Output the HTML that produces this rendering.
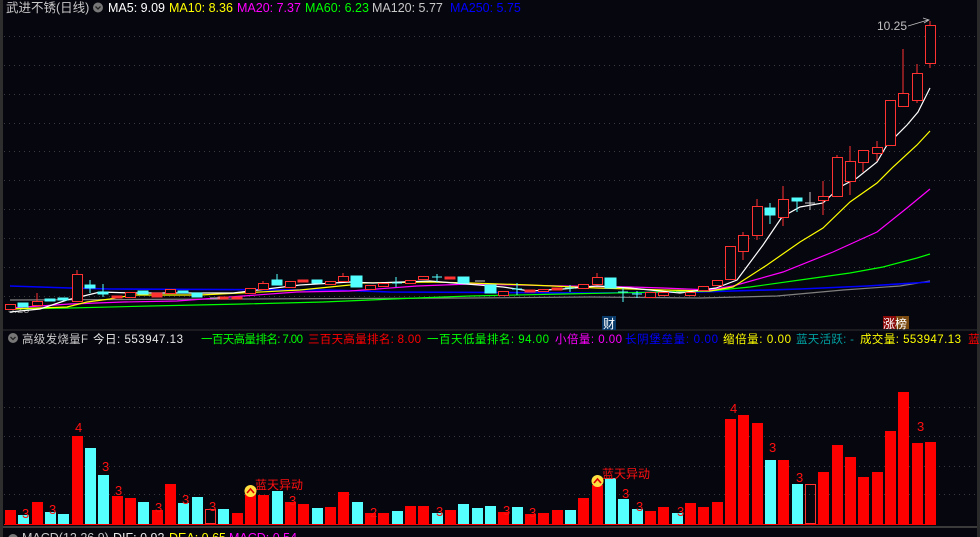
<!DOCTYPE html>
<html><head><meta charset="utf-8"><style>
html,body{margin:0;padding:0;background:#06060e;width:980px;height:537px;overflow:hidden}
svg{display:block}
text{font-family:"Liberation Sans","Noto Sans CJK SC",sans-serif}
</style></head><body>
<svg width="980" height="537" viewBox="0 0 980 537" xmlns="http://www.w3.org/2000/svg">
<rect width="980" height="537" fill="#06060e"/>
<rect x="0" y="0" width="3" height="537" fill="#2e2e2e"/>
<rect x="977" y="0" width="3" height="537" fill="#2a2a2a"/>
<line x1="3" y1="330" x2="977" y2="330" stroke="#333" stroke-width="1"/>
<line x1="3" y1="527" x2="977" y2="527" stroke="#3a3a3a" stroke-width="2"/>
<g stroke="#3a3a3a" stroke-dasharray="1,4" stroke-width="1">
<line x1="4" y1="36.5" x2="976" y2="36.5"/><line x1="4" y1="65.5" x2="976" y2="65.5"/><line x1="4" y1="94.5" x2="976" y2="94.5"/><line x1="4" y1="123.5" x2="976" y2="123.5"/><line x1="4" y1="151.5" x2="976" y2="151.5"/><line x1="4" y1="180.5" x2="976" y2="180.5"/><line x1="4" y1="209.5" x2="976" y2="209.5"/><line x1="4" y1="238.5" x2="976" y2="238.5"/><line x1="4" y1="267.5" x2="976" y2="267.5"/><line x1="4" y1="296.5" x2="976" y2="296.5"/>
<line x1="4" y1="407.5" x2="976" y2="407.5"/><line x1="4" y1="436.5" x2="976" y2="436.5"/><line x1="4" y1="466.5" x2="976" y2="466.5"/><line x1="4" y1="494.5" x2="976" y2="494.5"/>
</g>
<!-- header -->
<g font-size="12.5">
<text x="6" y="12" fill="#c8c8c8">武进不锈(日线)</text>
<circle cx="98" cy="7.5" r="5" fill="#777"/><path d="M95.5 6.5 L98 9 L100.5 6.5" stroke="#222" stroke-width="1.3" fill="none"/>
<text x="108" y="12" fill="#fff">MA5: 9.09</text>
<text x="169" y="12" fill="#ffff00">MA10: 8.36</text>
<text x="237" y="12" fill="#ff00ff">MA20: 7.37</text>
<text x="305" y="12" fill="#00ff00">MA60: 6.23</text>
<text x="372" y="12" fill="#c8c8c8">MA120: 5.77</text>
<text x="450" y="12" fill="#0000ff">MA250: 5.75</text>
</g>
<text x="877" y="30" font-size="12" fill="#c0c0c0">10.25</text>
<path d="M908 26 L928 20 M923 18 L929 20 L924 23" stroke="#c0c0c0" fill="none" stroke-width="0.8"/>
<text x="8" y="313" font-size="11" fill="#888">3.23</text>
<!-- MAs -->
<g fill="none" stroke-width="1.2">
<polyline stroke="#808080" points="10,300 470,298 590,297 700,298 777,296 843,290 900,286 930,281"/>
<polyline stroke="#0000ff" stroke-width="1.6" points="10,286 70,288 110,289 330,290 390,292 590,293 700,292 800,289 867,286 930,282"/>
<polyline stroke="#00ff00" points="10,309 70,308 150,306 243,304 323,302 417,298 470,296 563,294 663,292 710,291 750,287 800,280 850,273 883,267 917,258 930,254"/>
<polyline stroke="#ff00ff" points="10,308 70,304 123,302 177,301 243,296 297,292 350,291 417,286 470,284 563,286 630,287 663,288 710,290 733,286 783,272 833,252 877,232 907,208 930,189"/>
<polyline stroke="#ffff00" points="10,309 67,307 87,302 110,299 133,295 200,295 300,290 350,285 363,283 430,282 470,283 530,285 597,288 663,290 710,291 733,287 767,265 800,242 823,228 850,202 877,183 893,167 917,145 930,131"/>
<polyline stroke="#ffffff" points="10,312 40,309 67,300 100,292 133,293 167,293 233,293 300,285 350,282 373,283 430,281 503,287 530,291 563,289 597,286 630,288 680,293 716,288 737,280 763,245 782,217 800,207 823,203 840,187 857,178 877,162 887,145 907,125 918,112 930,88"/>
</g>
<!-- candles -->
<g stroke="#ff3232" fill="#06060e" stroke-width="1">
<rect x="5.5" y="304.5" width="10" height="5"/><line x1="37" y1="293" x2="37" y2="301"/><rect x="32.5" y="301.5" width="10" height="4"/>
<line x1="77" y1="270" x2="77" y2="274"/><rect x="72.5" y="274.5" width="10" height="27"/>
<rect x="112" y="296" width="10" height="2" fill="#ff3232"/><rect x="125.5" y="292.5" width="10" height="5"/>
<rect x="152" y="293" width="10" height="4" fill="#ff3232"/><rect x="165.5" y="289.5" width="10" height="4"/>
<rect x="218" y="297" width="10" height="2" fill="#ff3232"/><rect x="232" y="297" width="10" height="2" fill="#ff3232"/>
<rect x="245.5" y="288.5" width="10" height="5"/><line x1="263" y1="281" x2="263" y2="283"/><rect x="258.5" y="283.5" width="10" height="6"/>
<rect x="285.5" y="281.5" width="10" height="6"/><rect x="298" y="280" width="10" height="2" fill="#ff3232"/>
<rect x="325.5" y="281.5" width="10" height="3"/><line x1="343" y1="273" x2="343" y2="276"/><rect x="338.5" y="276.5" width="10" height="5"/>
<rect x="365.5" y="285.5" width="10" height="4"/><rect x="378.5" y="283.5" width="10" height="3"/>
<rect x="405.5" y="280.5" width="10" height="3"/><rect x="418.5" y="276.5" width="10" height="3"/>
<rect x="445" y="277" width="10" height="2" fill="#ff3232"/><rect x="498.5" y="291.5" width="10" height="4"/>
<rect x="525" y="290" width="10" height="2" fill="#ff3232"/><rect x="538.5" y="289.5" width="10" height="2"/><rect x="552" y="288" width="10" height="2" fill="#ff3232"/>
<rect x="578.5" y="284.5" width="10" height="4"/><line x1="597" y1="273" x2="597" y2="277"/><rect x="592.5" y="277.5" width="10" height="7"/>
<rect x="645.5" y="292.5" width="10" height="5"/><rect x="658.5" y="292.5" width="10" height="3"/><rect x="685.5" y="292.5" width="10" height="3"/><rect x="698.5" y="286.5" width="10" height="4"/>
<rect x="712.5" y="280.5" width="10" height="5"/>
<rect x="725.5" y="246.5" width="10" height="33"/>
<line x1="743" y1="232" x2="743" y2="260"/><rect x="738.5" y="235.5" width="10" height="16"/>
<line x1="757" y1="199" x2="757" y2="240"/><rect x="752.5" y="206.5" width="10" height="29"/>
<line x1="783" y1="186" x2="783" y2="226"/><rect x="778.5" y="199.5" width="10" height="18"/>
<line x1="823" y1="181" x2="823" y2="215"/><rect x="818.5" y="196.5" width="10" height="4"/>
<line x1="837" y1="155" x2="837" y2="157"/><rect x="832.5" y="157.5" width="10" height="39"/>
<line x1="850" y1="146" x2="850" y2="195"/><rect x="845.5" y="161.5" width="10" height="20"/>
<line x1="863" y1="162" x2="863" y2="172"/><rect x="858.5" y="150.5" width="10" height="12"/>
<line x1="877" y1="141" x2="877" y2="161"/><rect x="872.5" y="147.5" width="10" height="6"/>
<rect x="885.5" y="100.5" width="10" height="45"/>
<line x1="903" y1="49" x2="903" y2="93"/><rect x="898.5" y="93.5" width="10" height="13"/>
<line x1="917" y1="64" x2="917" y2="103"/><rect x="912.5" y="73.5" width="10" height="27"/>
<line x1="930" y1="21" x2="930" y2="68"/><rect x="925.5" y="25.5" width="10" height="38"/>
</g>
<g stroke="#54ffff" fill="#54ffff" stroke-width="1">
<rect x="18" y="303" width="10" height="4"/><rect x="45" y="299" width="10" height="2"/><rect x="58" y="298" width="10" height="2"/>
<line x1="90" y1="280" x2="90" y2="293"/><rect x="85" y="285" width="10" height="3"/>
<line x1="103" y1="284" x2="103" y2="297"/><rect x="98" y="292" width="10" height="2"/>
<rect x="138" y="291" width="10" height="3"/><rect x="178" y="291" width="10" height="2"/><rect x="192" y="293" width="10" height="4"/>
<line x1="277" y1="274" x2="277" y2="280"/><rect x="272" y="280" width="10" height="5"/><rect x="312" y="280" width="10" height="3"/>
<rect x="351" y="276" width="11" height="11"/><line x1="396" y1="277" x2="396" y2="287"/><line x1="392" y1="283" x2="402" y2="283"/>
<line x1="437" y1="274" x2="437" y2="282"/><line x1="432" y1="277" x2="442" y2="277"/>
<rect x="458" y="277" width="11" height="6"/><rect x="485" y="285" width="11" height="8"/>
<line x1="517" y1="283" x2="517" y2="295"/><line x1="512" y1="289" x2="522" y2="289"/>
<line x1="570" y1="285" x2="570" y2="292"/><line x1="565" y1="288" x2="575" y2="288"/>
<rect x="605" y="278" width="11" height="10"/><line x1="623" y1="288" x2="623" y2="302"/><line x1="618" y1="292" x2="628" y2="292"/>
<line x1="637" y1="291" x2="637" y2="298"/><line x1="632" y1="294" x2="642" y2="294"/>
<line x1="770" y1="203" x2="770" y2="224"/><rect x="765" y="208" width="10" height="7"/>
<line x1="797" y1="198" x2="797" y2="212"/><rect x="792" y="198" width="10" height="3"/>
</g>
<g stroke="#c8c8c8" stroke-width="1"><line x1="210" y1="298" x2="220" y2="298"/><line x1="475" y1="281" x2="485" y2="281"/><line x1="676" y1="292" x2="686" y2="292"/><line x1="810" y1="192" x2="810" y2="210"/><line x1="805" y1="203" x2="815" y2="203"/></g>
<!-- markers -->
<rect x="602" y="316" width="14" height="14" fill="#0a3a6a"/><text x="603" y="328" font-size="12" fill="#fff">财</text>
<rect x="883" y="316" width="13" height="13" fill="#8a0a0a"/><rect x="896" y="316" width="13" height="13" fill="#7a4a10"/><text x="883" y="328" font-size="12" fill="#fff">涨榜</text>
<!-- lower header -->
<g font-size="11.5">
<circle cx="13" cy="338" r="5" fill="#777"/><path d="M10.5 337 L13 339.5 L15.5 337" stroke="#222" stroke-width="1.3" fill="none"/>
<text x="22" y="343" fill="#c8c8c8" textLength="66">高级发烧量F</text>
<text x="93" y="343" fill="#e8e8e8" textLength="90">今日: 553947.13</text>
<text x="201" y="343" fill="#00ff00" textLength="102">一百天高量排名: 7.00</text>
<text x="308" y="343" fill="#ff0000" textLength="113">三百天高量排名: 8.00</text>
<text x="427" y="343" fill="#00ff00" textLength="122">一百天低量排名: 94.00</text>
<text x="555" y="343" fill="#ff00ff" textLength="67">小倍量: 0.00</text>
<text x="625" y="343" fill="#0000ff" textLength="93">长阴堡垒量: 0.00</text>
<text x="723" y="343" fill="#ffff00" textLength="68">缩倍量: 0.00</text>
<text x="796" y="343" fill="#00a0a0" textLength="58">蓝天活跃: -</text>
<text x="860" y="343" fill="#ffff00" textLength="101">成交量: 553947.13</text>
<text x="968" y="343" fill="#ff0000">蓝</text>
</g>
<!-- volume bars -->
<g fill="#ff0000">
<rect x="5" y="510" width="11" height="14"/><rect x="32" y="502" width="11" height="22"/><rect x="72" y="436" width="11" height="88"/><rect x="112" y="496" width="11" height="28"/><rect x="125" y="498" width="11" height="26"/><rect x="152" y="510" width="11" height="14"/><rect x="165" y="484" width="11" height="40"/><rect x="232" y="513" width="11" height="11"/><rect x="245" y="494" width="11" height="30"/><rect x="258" y="495" width="11" height="29"/><rect x="285" y="502" width="11" height="22"/><rect x="298" y="504" width="11" height="20"/>
<rect x="325" y="507" width="11" height="17"/><rect x="338" y="492" width="11" height="32"/><rect x="365" y="513" width="11" height="11"/><rect x="378" y="513" width="11" height="11"/><rect x="405" y="506" width="11" height="18"/><rect x="418" y="506" width="11" height="18"/><rect x="445" y="510" width="11" height="14"/><rect x="498" y="512" width="11" height="12"/><rect x="525" y="514" width="11" height="10"/><rect x="538" y="513" width="11" height="11"/><rect x="552" y="510" width="11" height="14"/><rect x="578" y="498" width="11" height="26"/><rect x="592" y="485" width="11" height="39"/><rect x="645" y="511" width="11" height="13"/><rect x="658" y="507" width="11" height="17"/>
<rect x="685" y="503" width="11" height="21"/><rect x="698" y="507" width="11" height="17"/><rect x="712" y="502" width="11" height="22"/><rect x="725" y="419" width="11" height="105"/><rect x="738" y="415" width="11" height="109"/><rect x="752" y="423" width="11" height="101"/><rect x="778" y="460" width="11" height="64"/><rect x="818" y="472" width="11" height="52"/><rect x="832" y="445" width="11" height="79"/><rect x="845" y="457" width="11" height="67"/><rect x="858" y="477" width="11" height="47"/><rect x="872" y="472" width="11" height="52"/><rect x="885" y="431" width="11" height="93"/><rect x="898" y="392" width="11" height="132"/><rect x="912" y="443" width="11" height="81"/><rect x="925" y="442" width="11" height="82"/>
</g>
<g fill="#55ffff">
<rect x="18" y="515" width="11" height="9"/><rect x="45" y="512" width="11" height="12"/><rect x="58" y="514" width="11" height="10"/><rect x="85" y="448" width="11" height="76"/><rect x="98" y="475" width="11" height="49"/><rect x="138" y="502" width="11" height="22"/><rect x="178" y="503" width="11" height="21"/><rect x="192" y="497" width="11" height="27"/><rect x="218" y="509" width="11" height="15"/><rect x="272" y="491" width="11" height="33"/><rect x="312" y="508" width="11" height="16"/>
<rect x="352" y="502" width="11" height="22"/><rect x="392" y="511" width="11" height="13"/><rect x="432" y="513" width="11" height="11"/><rect x="458" y="504" width="11" height="20"/><rect x="472" y="508" width="11" height="16"/><rect x="485" y="506" width="11" height="18"/><rect x="512" y="507" width="11" height="17"/><rect x="565" y="510" width="11" height="14"/><rect x="605" y="478" width="11" height="46"/><rect x="618" y="499" width="11" height="25"/><rect x="632" y="509" width="11" height="15"/><rect x="672" y="513" width="11" height="11"/><rect x="765" y="460" width="11" height="64"/><rect x="792" y="484" width="11" height="40"/>
</g>
<g fill="none" stroke="#ff3232"><rect x="205.5" y="509.5" width="10" height="14"/><rect x="805.5" y="484.5" width="10" height="39"/></g>
<line x1="4" y1="524.5" x2="936" y2="524.5" stroke="#ff0000" stroke-width="1"/>
<!-- labels -->
<g font-size="13" fill="#ff1010">
<text x="22" y="518">3</text><text x="49" y="514">3</text><text x="75" y="432">4</text><text x="102" y="471">3</text><text x="115" y="495">3</text><text x="155" y="512">3</text><text x="182" y="504">3</text><text x="209" y="511">3</text><text x="289" y="505">3</text>
<text x="370" y="517">2</text><text x="436" y="516">3</text><text x="503" y="515">3</text><text x="529" y="517">3</text><text x="622" y="498">3</text><text x="636" y="511">3</text><text x="677" y="516">3</text>
<text x="730" y="413">4</text><text x="769" y="452">3</text><text x="796" y="482">3</text><text x="917" y="431">3</text>
<text x="255" y="489" font-size="12">蓝天异动</text><text x="602" y="478" font-size="12">蓝天异动</text>
</g>
<circle cx="250.5" cy="491" r="6" fill="#ffe040"/><path d="M247 493 L250.5 489 L254 493" stroke="#d00" stroke-width="1.6" fill="none"/>
<circle cx="597.5" cy="481" r="6" fill="#ffe040"/><path d="M594 483 L597.5 479 L601 483" stroke="#d00" stroke-width="1.6" fill="none"/>
<!-- macd header -->
<g font-size="12.5">
<circle cx="13" cy="539" r="5" fill="#777"/>
<text x="22" y="542" fill="#c8c8c8">MACD(12,26,9)</text>
<text x="113" y="542" fill="#e8e8e8">DIF: 0.92</text>
<text x="169" y="542" fill="#ffff00">DEA: 0.65</text>
<text x="229" y="542" fill="#ff00ff">MACD: 0.54</text>
</g>
</svg>
</body></html>
